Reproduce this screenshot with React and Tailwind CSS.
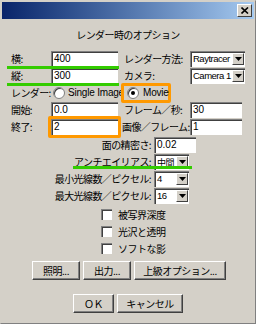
import React from 'react'

const jp = { fontFamily: '"Noto Sans CJK JP", "Liberation Sans", sans-serif' }
const en = { fontFamily: '"Liberation Sans", "Noto Sans CJK JP", sans-serif' }

function Field({ value, w = 'w-[67px]' }) {
  return (
    <div className={`${w} shrink-0 h-[16px] bg-white border-t border-l border-[#808080] shadow-[inset_1px_1px_0_#404040] flex items-center pl-[2px] text-[10px] text-black leading-none`} style={en}>
      {value}
    </div>
  )
}

function Select({ value, w = 'w-[55px]', cjk }) {
  return (
    <div className={`${w} shrink-0 h-[16px] bg-white border-t border-l border-[#808080] shadow-[inset_1px_1px_0_#404040] flex items-center text-black leading-none`} style={cjk ? jp : en}>
      <span className={`flex-1 pl-[2px] whitespace-nowrap ${cjk ? 'text-[9px] tracking-[-0.5px]' : 'text-[9.5px] tracking-[-0.5px]'}`}>{value}</span>
      <span className="w-[12px] h-[12px] mr-[1px] shrink-0 bg-[#d4d0c8] border-t border-l border-white border-r border-b border-r-[#404040] border-b-[#404040] flex items-center justify-center">
        <svg width="7" height="4" viewBox="0 0 7 4"><path d="M0 0h7L3.5 4z" fill="#000" /></svg>
      </span>
    </div>
  )
}

function Radio({ checked }) {
  return (
    <span className="w-[12px] h-[12px] shrink-0 rounded-full bg-white border border-[#808080] flex items-center justify-center shadow-[inset_1px_1px_0_#404040]">
      {checked && <span className="w-[4px] h-[4px] rounded-full bg-black" />}
    </span>
  )
}

function Check({ label }) {
  return (
    <div className="flex items-center h-[17px] pl-[100px] gap-[6px]">
      <span className="w-[11px] h-[11px] shrink-0 bg-white border-t border-l border-[#808080] shadow-[inset_1px_1px_0_#404040]" />
      <span className="text-[10px] whitespace-nowrap tracking-[-0.5px]" style={jp}>{label}</span>
    </div>
  )
}

function Button({ children, w }) {
  return (
    <div className={`${w} shrink-0 h-[19px] bg-[#d4d0c8] border-t border-l border-white border-r border-b border-r-[#404040] border-b-[#404040] shadow-[inset_-1px_-1px_0_#808080] flex items-center justify-center text-[10px] text-black whitespace-nowrap tracking-[-0.5px]`} style={jp}>
      {children}
    </div>
  )
}

function Label({ children, w, className = '' }) {
  return <span className={`${w} shrink-0 whitespace-nowrap text-[10px] tracking-[-0.6px] ${className}`}>{children}</span>
}

export default function App() {
  return (
    <div className="w-[256px] h-[324px] bg-[#d4d0c8] border-t border-l border-[#d4d0c8] border-r border-b border-r-[#808080] border-b-[#808080] relative overflow-hidden text-black" style={jp}>
      <div className="h-[17px] mx-[1px] mt-[1px] bg-gradient-to-r from-[#0a246a] to-[#a6caf0] flex items-center justify-end pr-[2px]">
        <div className="w-[15px] h-[13px] bg-[#d4d0c8] border-t border-l border-white border-r border-b border-r-[#404040] border-b-[#404040] flex items-center justify-center">
          <svg width="8" height="7" viewBox="0 0 8 7"><path d="M0.5 0.5L7 6.5M7 0.5L0.5 6.5" stroke="#000" strokeWidth="1.6" /></svg>
        </div>
      </div>

      <div className="text-center text-[10px] tracking-[-0.6px] mt-[7px] h-[17px] leading-[17px]">レンダー時のオプション</div>

      <div className="mt-[7px] flex flex-col">
        <div className="flex items-center h-[17px]">
          <Label w="w-[50px]" className="pl-[10px]">横:</Label>
          <Field value="400" />
          <Label w="w-[72px]" className="pl-[6px]">レンダー方法:</Label>
          <Select value="Raytracer" />
        </div>
        <div className="flex items-center h-[17px]">
          <Label w="w-[50px]" className="pl-[10px]">縦:</Label>
          <Field value="300" />
          <Label w="w-[72px]" className="pl-[6px]">カメラ:</Label>
          <Select value="Camera 1" />
        </div>
        <div className="flex items-center h-[17px]">
          <Label w="w-[52px]" className="pl-[10px]">レンダー:</Label>
          <Radio />
          <span className="ml-[3px] w-[53px] shrink-0 whitespace-nowrap text-[10px] tracking-[-0.2px]" style={en}>Single Image</span>
          <div className="flex items-center gap-[4px] border-[3px] border-[#ff9900] rounded-[2px] h-[20px] w-[50px] shrink-0 pl-[3px]">
            <Radio checked />
            <span className="text-[10px] tracking-[-0.2px]" style={en}>Movie</span>
          </div>
        </div>
        <div className="flex items-center h-[17px]">
          <Label w="w-[50px]" className="pl-[10px]">開始:</Label>
          <Field value="0.0" />
          <Label w="w-[72px]" className="pl-[6px]">フレーム／秒:</Label>
          <Field value="30" w="w-[52px]" />
        </div>
        <div className="flex items-center h-[17px]">
          <Label w="w-[46px]" className="pl-[10px]">終了:</Label>
          <div className="border-[3px] border-[#ff9900] rounded-[2px] mr-[-3px] ml-[1px] shrink-0">
            <Field value="2" w="w-[67px]" />
          </div>
          <Label w="w-[72px]" className="pl-[4px]">画像／フレーム:</Label>
          <Field value="1" w="w-[52px]" />
        </div>
        <div className="flex items-center h-[17px] mt-[1px]">
          <Label w="w-[153px]" className="pr-[3px] text-right">面の精密さ:</Label>
          <Field value="0.02" w="w-[42px]" />
        </div>
        <div className="flex items-center h-[17px]">
          <Label w="w-[153px]" className="pr-[3px] text-right">アンチエイリアス:</Label>
          <Select value="中間" w="w-[35px]" cjk />
        </div>
        <div className="flex items-center h-[17px]">
          <Label w="w-[153px]" className="pr-[3px] text-right">最小光線数／ピクセル:</Label>
          <Select value="4" w="w-[35px]" />
        </div>
        <div className="flex items-center h-[17px]">
          <Label w="w-[153px]" className="pr-[3px] text-right">最大光線数／ピクセル:</Label>
          <Select value="16" w="w-[35px]" />
        </div>
      </div>

      <div className="mt-[2px] flex flex-col">
        <Check label="被写界深度" />
        <Check label="光沢と透明" />
        <Check label="ソフトな影" />
      </div>

      <div className="mt-[4px] flex justify-center gap-[3px] pl-[2px]">
        <Button w="w-[48px]">照明...</Button>
        <Button w="w-[48px]">出力...</Button>
        <Button w="w-[92px]">上級オプション...</Button>
      </div>

      <div className="mt-[14px] flex justify-center gap-[3px]">
        <Button w="w-[41px]">ＯＫ</Button>
        <Button w="w-[66px]">キャンセル</Button>
      </div>

      <div className="absolute left-[6px] top-[65px] w-[112px] h-[3px] bg-[#33cc00]" />
      <div className="absolute left-[6px] top-[82px] w-[112px] h-[3px] bg-[#33cc00]" />
      <div className="absolute left-[72px] top-[165px] w-[119px] h-[3px] bg-[#33cc00]" />
    </div>
  )
}
